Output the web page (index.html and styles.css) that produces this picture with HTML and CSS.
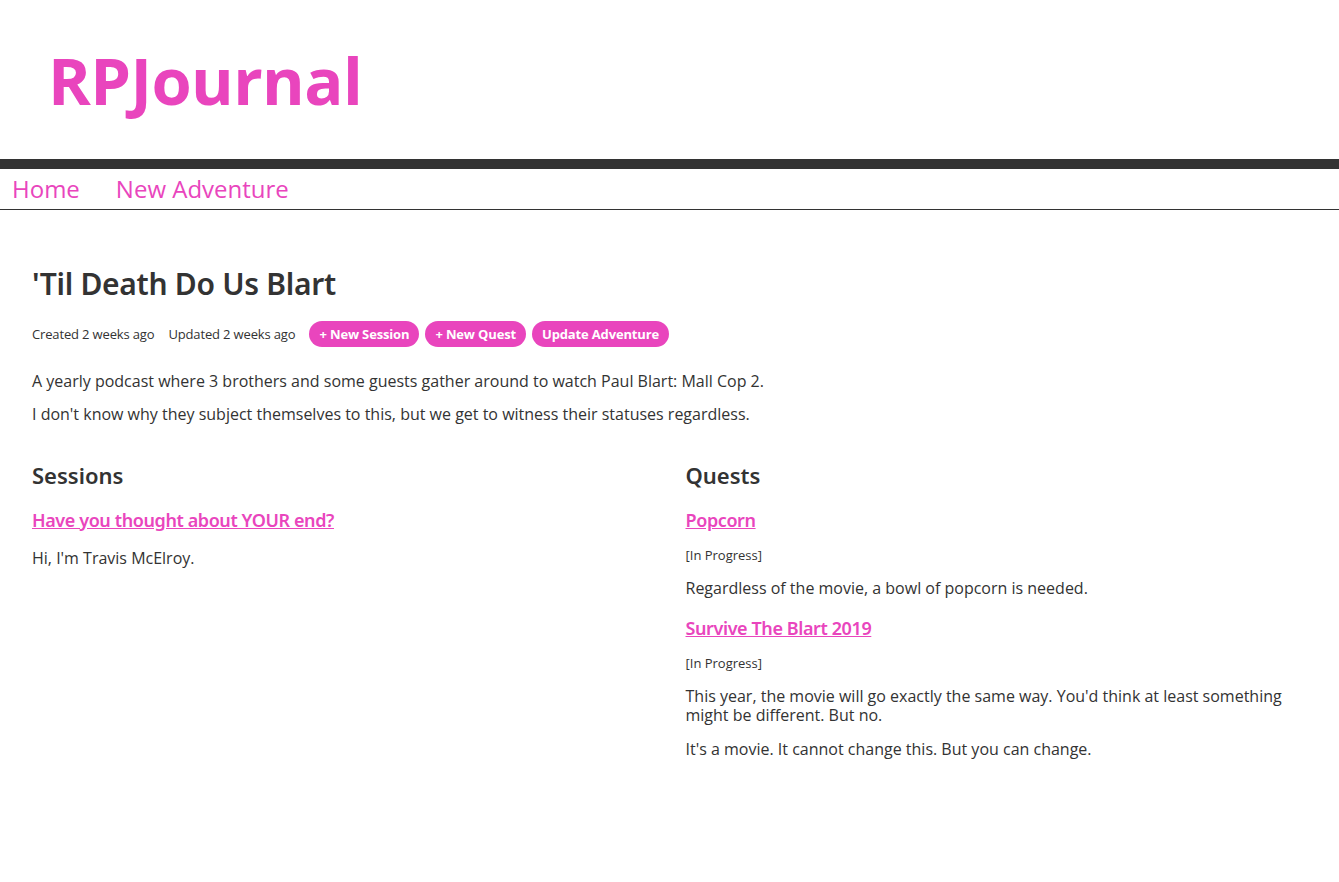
FILE: index.html
```html
<!DOCTYPE html>
<html>
<head>
<meta charset="utf-8">
<link rel="stylesheet" href="styles.css">
</head>
<body>
<header class="site-header">
  <div class="logo">RPJournal</div>
</header>
<nav class="nav">
  <a href="#">Home</a>
  <a href="#">New Adventure</a>
</nav>
<main class="main">
  <h1 class="title">'Til Death Do Us Blart</h1>
  <div class="meta">
    <span>Created 2 weeks ago</span>
    <span>Updated 2 weeks ago</span>
    <a class="btn" href="#">+ New Session</a>
    <a class="btn" href="#">+ New Quest</a>
    <a class="btn" href="#">Update Adventure</a>
  </div>
  <p class="desc">A yearly podcast where 3 brothers and some guests gather around to watch Paul Blart: Mall Cop 2.</p>
  <p class="desc">I don't know why they subject themselves to this, but we get to witness their statuses regardless.</p>
  <div class="columns">
    <section>
      <h2 class="section-title">Sessions</h2>
      <div class="item">
        <a class="item-title" href="#">Have you thought about YOUR end?</a>
        <p class="item-text">Hi, I'm Travis McElroy.</p>
      </div>
    </section>
    <section>
      <h2 class="section-title">Quests</h2>
      <div class="item">
        <a class="item-title" href="#">Popcorn</a>
        <div class="status">[In Progress]</div>
        <p class="item-text">Regardless of the movie, a bowl of popcorn is needed.</p>
      </div>
      <div class="item">
        <a class="item-title" href="#">Survive The Blart 2019</a>
        <div class="status">[In Progress]</div>
        <p class="item-text">This year, the movie will go exactly the same way. You'd think at least something might be different. But no.</p>
        <p class="item-text">It's a movie. It cannot change this. But you can change.</p>
      </div>
    </section>
  </div>
</main>
</body>
</html>
```
FILE: styles.css
```css
* { box-sizing: border-box; }
body {
  margin: 0;
  font-family: "Open Sans", "Noto Sans", sans-serif;
  color: #333;
  background: #fff;
}
.site-header {
  height: 169px;
  padding: 40px 0 0 48px;
  border-bottom: 10px solid #333;
}
.logo {
  font-family: "Open Sans", sans-serif;
  font-weight: 700;
  font-size: 65px;
  line-height: 80px;
  color: #e945bd;
  letter-spacing: -0.6px;
}
.nav {
  display: flex;
  gap: 36px;
  padding: 0 12px;
  height: 41px;
  align-items: center;
  border-bottom: 1px solid #333;
}
.nav a {
  color: #e945bd;
  text-decoration: none;
  font-size: 24px;
  line-height: 40px;
}
.main {
  padding: 54px 32px 40px;
}
.title {
  margin: 0;
  font-family: "Noto Sans", "Open Sans", sans-serif;
  font-weight: 600;
  font-size: 30px;
  line-height: 40px;
  letter-spacing: -0.3px;
}
.meta {
  display: flex;
  align-items: center;
  gap: 6px;
  margin-top: 17px;
  font-size: 13px;
  letter-spacing: -0.15px;
}
.meta span { margin-right: 8px; }
.btn {
  background: #e945bd;
  color: #fff;
  text-decoration: none;
  font-weight: 700;
  font-size: 13px;
  height: 26px;
  line-height: 26px;
  padding: 0 10px;
  border-radius: 13px;
}
.desc {
  margin: 23px 0 0;
  font-size: 16px;
  line-height: 22px;
}
.desc + .desc { margin-top: 11px; }
.columns {
  display: grid;
  grid-template-columns: 1fr 1fr;
  gap: 32px;
  margin-top: 35px;
}
.section-title {
  margin: 0;
  font-family: "Noto Sans", "Open Sans", sans-serif;
  font-weight: 600;
  font-size: 22px;
  line-height: 30px;
}
.item { margin-top: 18px; }
.item + .item { margin-top: 18px; }
.item-title {
  display: inline-block;
  color: #e945bd;
  font-family: "Noto Sans", "Open Sans", sans-serif;
  font-weight: 600;
  font-size: 18px;
  line-height: 24px;
  letter-spacing: -0.4px;
  text-decoration: underline;
}
.status {
  margin-top: 15px;
  font-size: 13px;
  line-height: 16px;
}
.item-text {
  margin: 16px 0 0;
  font-size: 16px;
  line-height: 19px;
}
.item-title + .item-text { margin-top: 17px; }
.item-text + .item-text { margin-top: 15px; }
```
